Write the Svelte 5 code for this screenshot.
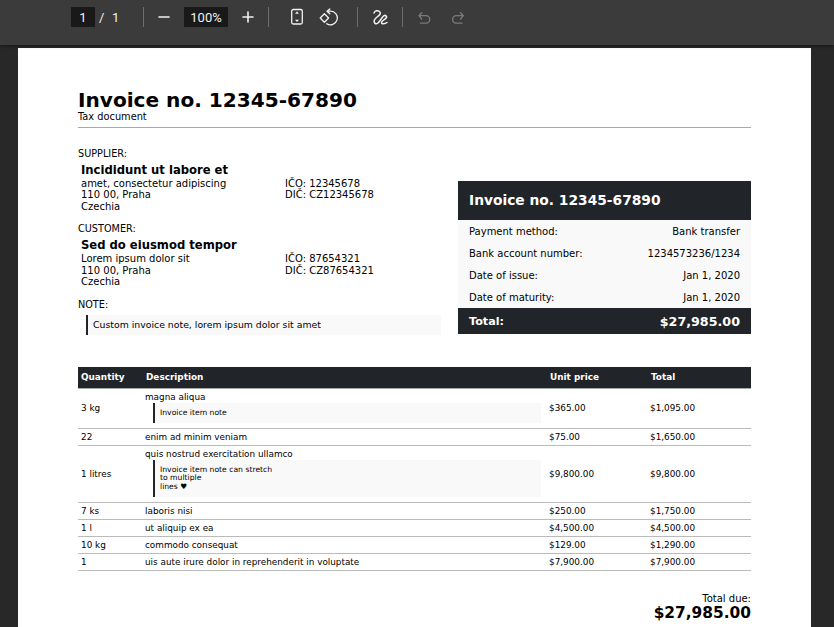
<script lang="ts">
	const items = [
		{ qty: '3 kg', name: 'magna aliqua', note: ['Invoice item note'], price: '$365.00', total: '$1,095.00' },
		{ qty: '22', name: 'enim ad minim veniam', price: '$75.00', total: '$1,650.00' },
		{ qty: '1 litres', name: 'quis nostrud exercitation ullamco', note: ['Invoice item note can stretch', 'to multiple', 'lines ♥'], price: '$9,800.00', total: '$9,800.00' },
		{ qty: '7 ks', name: 'laboris nisi', price: '$250.00', total: '$1,750.00' },
		{ qty: '1 l', name: 'ut aliquip ex ea', price: '$4,500.00', total: '$4,500.00' },
		{ qty: '10 kg', name: 'commodo consequat', price: '$129.00', total: '$1,290.00' },
		{ qty: '1', name: 'uis aute irure dolor in reprehenderit in voluptate', price: '$7,900.00', total: '$7,900.00' }
	];

	const details = [
		['Payment method:', 'Bank transfer'],
		['Bank account number:', '1234573236/1234'],
		['Date of issue:', 'Jan 1, 2020'],
		['Date of maturity:', 'Jan 1, 2020']
	];
</script>

<div class="viewer">
	<header class="toolbar">
		<span class="num page-num">1</span>
		<span class="sep-text">/</span>
		<span class="page-total">1</span>
		<span class="divider d1"></span>
		<svg class="ico minus" viewBox="0 0 16 16"><path d="M3 8h10" /></svg>
		<span class="num zoom-num">100%</span>
		<svg class="ico plus" viewBox="0 0 16 16"><path d="M3 8h10M8 3v10" /></svg>
		<span class="divider d2"></span>
		<svg class="ico fit" viewBox="0 0 16 20">
			<rect x="2.7" y="2.5" width="10.600" height="14.500" rx="1.500" />
			<path class="fill" d="M8 4.500l2 2.200H6zM8 15l-2-2.200h4z" />
		</svg>
		<svg class="ico rotate" viewBox="0 0 20 20">
			<path d="M1.200 10 5.400 5.800 9.600 10l-4.200 4.200z" />
			<path d="M8 3.200h3.500a6.800 6.800 0 1 1-3.700 12.500M10.800.9 8 3.200l2.800 2.500" />
		</svg>
		<span class="divider d3"></span>
		<svg class="ico draw" viewBox="0 0 20 20">
			<path d="M4 6C5 3.500 7.500 3 9.500 4.500 12 6.500 9 8.500 6.500 10.500 4 12.500 3.500 14.500 5 16.500 7 18 9.500 14.500 11.500 11.500 13 9 15 7 16.500 9.500 17.500 12 12 13 11.500 15.500 11.500 17.500 15 17 17 15.500" />
		</svg>
		<span class="divider d4"></span>
		<svg class="ico undo dim" viewBox="0 0 20 20"><path d="M5.700 4.700 3 7.700 5.700 11M3 7.700h7a3.700 3.700 0 0 1 0 7.400H4.500" /></svg>
		<svg class="ico redo dim" viewBox="0 0 20 20"><path d="M12.600 4.700l2.700 3-2.700 3.300M15.300 7.700h-7a3.700 3.700 0 0 0 0 7.400H14" /></svg>
	</header>

	<main class="stage">
		<article class="sheet">
			<h1>Invoice no. 12345-67890</h1>
			<p class="subtitle">Tax document</p>
			<hr />

			<div class="top">
				<div class="parties">
					<div class="label">SUPPLIER:</div>
					<div class="party">
						<strong>Incididunt ut labore et</strong>
						<div class="party-row">
							<div>amet, consectetur adipiscing<br />110 00, Praha<br />Czechia</div>
							<div>IČO: 12345678<br />DIČ: CZ12345678</div>
						</div>
					</div>
					<div class="label">CUSTOMER:</div>
					<div class="party">
						<strong>Sed do eiusmod tempor</strong>
						<div class="party-row">
							<div>Lorem ipsum dolor sit<br />110 00, Praha<br />Czechia</div>
							<div>IČO: 87654321<br />DIČ: CZ87654321</div>
						</div>
					</div>
					<div class="label">NOTE:</div>
					<div class="note">Custom invoice note, lorem ipsum dolor sit amet</div>
				</div>

				<aside class="summary">
					<div class="summary-head">Invoice no. 12345-67890</div>
					<div class="summary-body">
						{#each details as [key, value]}
							<div class="summary-row"><span>{key}</span><span>{value}</span></div>
						{/each}
					</div>
					<div class="summary-total"><span>Total:</span><b>$27,985.00</b></div>
				</aside>
			</div>

			<table>
				<thead>
					<tr>
						<th class="c-qty">Quantity</th>
						<th class="c-desc">Description</th>
						<th class="c-price">Unit price</th>
						<th class="c-total">Total</th>
					</tr>
				</thead>
				<tbody>
					{#each items as item}
						<tr>
							<td>{item.qty}</td>
							<td class="c-desc">
								{item.name}
								{#if item.note}
									<div class="item-note">
										{#each item.note as line}
											<div>{line}</div>
										{/each}
									</div>
								{/if}
							</td>
							<td>{item.price}</td>
							<td>{item.total}</td>
						</tr>
					{/each}
				</tbody>
			</table>

			<div class="due">
				<div>Total due:</div>
				<b>$27,985.00</b>
			</div>
		</article>
	</main>
</div>

<style>
	:global(body) {
		margin: 0;
		background: #282828;
		overflow: hidden;
	}

	.viewer {
		height: 627px;
		overflow: hidden;
		font-family: 'DejaVu Sans', sans-serif;
	}

	.toolbar {
		position: relative;
		height: 45px;
		background: #3b3b3b;
		color: #f1f1f1;
		font-family: Roboto, sans-serif;
		font-size: 13px;
		box-shadow: 0 1px 3px rgba(0, 0, 0, 0.5);
	}

	/* toolbar controls sit at fixed spots, like the viewer's own strip */
	.toolbar > * {
		position: absolute;
	}

	.num {
		top: 7px;
		height: 20px;
		background: #191919;
		display: flex;
		align-items: center;
		justify-content: center;
	}

	.page-num { left: 71px; width: 24px; }
	.zoom-num { left: 184px; width: 44px; }
	.sep-text { left: 99px; top: 10px; }
	.page-total { left: 112px; top: 10px; }

	.divider {
		top: 7px;
		width: 1px;
		height: 20px;
		background: #6e6e6e;
	}

	.d1 { left: 143px; }
	.d2 { left: 268px; }
	.d3 { left: 357px; }
	.d4 { left: 402px; }

	.ico {
		fill: none;
		stroke: #f1f1f1;
		stroke-width: 1.3;
		stroke-linecap: round;
		stroke-linejoin: round;
	}

	.ico .fill {
		fill: #f1f1f1;
		stroke: none;
	}

	.minus { left: 156px; top: 9px; width: 16px; height: 16px; stroke-width: 1.6; }
	.plus { left: 240px; top: 9px; width: 16px; height: 16px; stroke-width: 1.6; }
	.fit { left: 289px; top: 7px; width: 16px; height: 20px; }
	.rotate { left: 319px; top: 8px; width: 20px; height: 20px; }
	.draw { left: 370px; top: 7px; width: 20px; height: 20px; stroke-width: 1.5; }
	.undo { left: 416px; top: 8px; width: 20px; height: 20px; }
	.redo { left: 448px; top: 8px; width: 20px; height: 20px; }
	.dim { opacity: 0.35; }

	.stage {
		padding: 3px 23px 0 18px;
	}

	.sheet {
		background: #fff;
		color: #000;
		padding: 41px 60px 0;
		height: 600px;
		box-sizing: border-box;
		font-size: 10px;
		line-height: 11.6px;
	}

	h1 {
		margin: 0;
		font-size: 20.1px;
		line-height: 22px;
		font-weight: 700;
	}

	.subtitle {
		margin: 0;
		font-size: 9.8px;
		line-height: 12px;
	}

	hr {
		margin: 4px 0 0;
		border: 0;
		border-top: 1px solid #aaa;
	}

	.top {
		display: flex;
		justify-content: space-between;
		margin-top: 20px;
	}

	.parties {
		width: 363px;
	}

	.label {
		margin-bottom: 4.500px;
		font-size: 9.7px;
	}

	.party {
		padding-left: 3px;
		margin-bottom: 11px;
	}

	.party strong {
		display: block;
		font-size: 11.6px;
		line-height: 13.500px;
	}

	.party-row {
		display: grid;
		grid-template-columns: 204px 1fr;
	}

	.note {
		margin-left: 8px;
		padding: 4.500px 0 4.500px 5px;
		border-left: 2px solid #212529;
		background: #f9f9f9;
		font-size: 9.33px;
	}

	.summary {
		align-self: flex-end;
		width: 293px;
		margin-bottom: 1px;
	}

	.summary-head {
		background: #212529;
		color: #fff;
		font-size: 13.8px;
		font-weight: 700;
		padding: 12px 11px;
		line-height: 15px;
	}

	.summary-body {
		background: #f9f9f9;
	}

	.summary-row {
		display: flex;
		justify-content: space-between;
		box-sizing: border-box;
		height: 22px;
		align-items: center;
		padding: 1px 11px 0;
		font-size: 10px;
	}

	.summary-total {
		display: flex;
		justify-content: space-between;
		align-items: center;
		box-sizing: border-box;
		height: 26px;
		padding: 1px 11px 0;
		background: #212529;
		color: #fff;
		font-size: 11.2px;
		font-weight: 700;
	}

	.summary-total b {
		font-size: 12.7px;
	}

	table {
		width: 100%;
		margin-top: 32px;
		border-collapse: collapse;
		table-layout: fixed;
		font-size: 8.85px;
	}

	th {
		background: #212529;
		color: #fff;
		text-align: left;
		font-size: 8.9px;
		font-weight: 700;
		padding: 4px 3px;
		height: 12.400px;
		border-bottom: 1px solid #aaa;
	}

	td {
		padding: 3px 3px 1.400px;
		border-bottom: 1px solid #bbb;
		vertical-align: middle;
	}

	.c-qty { width: 58px; }
	.c-price { width: 94px; }
	.c-total { width: 97px; }
	th.c-desc, th.c-price, th.c-total { padding-left: 4px; }

	.item-note {
		margin: 0 2px 3.600px 8px;
		padding: 5.500px 5px;
		border-left: 2px solid #212529;
		background: #f9f9f9;
		font-size: 7.66px;
		line-height: 8.500px;
	}

	.due {
		margin-top: 22px;
		text-align: right;
		font-size: 10px;
		line-height: 11px;
	}

	.due b {
		font-size: 15.4px;
		line-height: 18px;
	}
</style>
